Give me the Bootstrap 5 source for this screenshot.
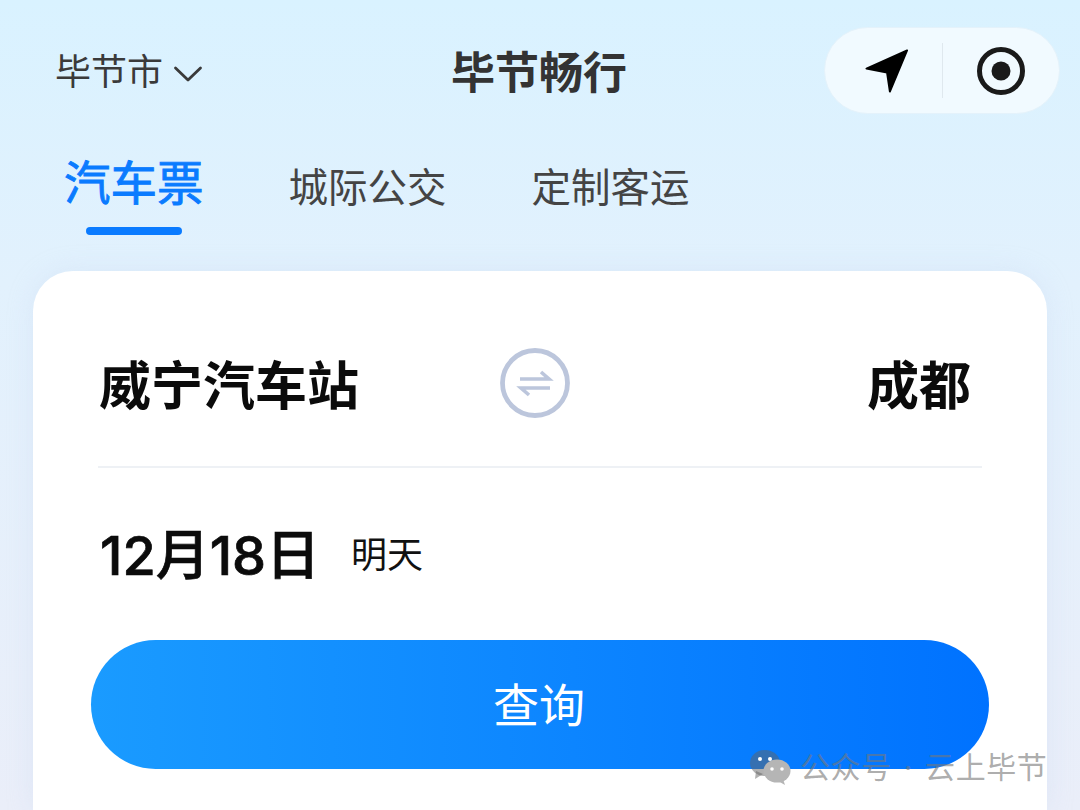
<!DOCTYPE html>
<html lang="zh-CN">

<head>
  <meta charset="UTF-8">
  <meta name="viewport" content="width=device-width, initial-scale=1.0">
  <title>毕节畅行</title>
  <link href="https://cdn.jsdelivr.net/npm/bootstrap@5.3.0/dist/css/bootstrap.min.css" rel="stylesheet">
  <style>
    html, body { height: 100%; }
    body {
      width: 1080px;
      height: 810px;
      overflow: hidden;
      position: relative;
      font-family: "Inter", "Noto Sans CJK SC", sans-serif;
      background: linear-gradient(180deg, #d9f2ff 0%, #e2f1fd 35%, #eaeef9 100%);
    }
    .top-head { padding: 27px 20px 0 55px; height: 114px; }
    .city-pick { width: 396px; font-size: 36px; color: #3a3a3a; line-height: 1; margin-top: 3px; }
    .city-pick svg { margin-left: 10px; margin-top: 3px; }
    .app-title { font-size: 44px; font-weight: 700; color: #333; line-height: 1; margin-top: 4px; }
    .capsule {
      width: 236px; height: 87px; border-radius: 44px;
      background: #f1faff; border: 1px solid #e4f2fb;
    }
    .capsule-sep { width: 1px; height: 55px; background: #dfe8ee; }
    .capsule-cell { width: 118px; }
    .nav-arrow { margin-left: 7px; }
    .tab-row { padding: 42px 0 0 64px; gap: 85px; height: 157px; }
    .tab-item { font-size: 39.5px; color: #444; line-height: 1; padding-top: 13px; position: relative; }
    .tab-item.is-on {
      font-size: 46.5px; font-weight: 400; color: #0a7bff; padding-top: 4px;
      -webkit-text-stroke: .9px #0a7bff;
    }
    .tab-item.is-on::after {
      content: ""; position: absolute; left: 22px; top: 71px;
      width: 96px; height: 8px; border-radius: 4px; background: #0a7bff;
    }
    .search-box {
      margin: 0 33px; height: 539px; border-radius: 40px 40px 0 0;
      background: #fff; padding: 0 58px;
      box-shadow: 0 0 24px rgba(200, 215, 240, .35);
    }
    .route-row {
      height: 197px; margin: 0 7px; padding: 36px 11px 0 1px;
      border-bottom: 2px solid #eef1f5;
    }
    .station { font-size: 52px; font-weight: 700; color: #0b0b0b; line-height: 1; }
    .station-from { width: 400px; }
    .swap-icon { margin-bottom: 8px; }
    .date-row { height: 172px; padding: 4px 9px 0; }
    .date-main {
      font-size: 54px; font-weight: 500; color: #0b0b0b; line-height: 1;
      -webkit-text-stroke: .7px #0b0b0b;
    }
    .date-sub { font-size: 36px; color: #111; line-height: 1; margin-left: 31px; margin-top: -3px; }
    .query-btn {
      width: 898px; height: 129px; border-radius: 65px; border: 0;
      background: linear-gradient(90deg, #1a9bff 0%, #0072ff 100%);
      color: #fff; font-size: 46px; line-height: 1; padding: 0 2px 0 0;
    }
    .wm-mark {
      position: absolute; left: 750px; top: 745px; gap: 9px;
      font-size: 30px; line-height: 44px; letter-spacing: .6px; color: rgba(120, 120, 120, .62);
    }
    .wm-dot { margin: 0 12px; }
  </style>
</head>

<body>
  <div class="top-head d-flex align-items-center">
    <div class="city-pick d-flex align-items-center">毕节市
      <svg width="30" height="18" viewBox="0 0 30 18"><path d="M2.500 3 15 15 27.500 3" fill="none" stroke="#3a3a3a" stroke-width="2.800" stroke-linecap="round" stroke-linejoin="round"/></svg>
    </div>
    <div class="app-title">毕节畅行</div>
    <div class="capsule d-flex align-items-center ms-auto">
      <div class="capsule-cell d-flex justify-content-center">
        <svg class="nav-arrow" width="44" height="44" viewBox="0 0 46 46"><path d="M44 1.500 1.500 20.500 23 24.500 26 44.500Z" fill="#000" stroke="#000" stroke-width="2" stroke-linejoin="round"/></svg>
      </div>
      <div class="capsule-sep"></div>
      <div class="capsule-cell d-flex justify-content-center">
        <svg width="48" height="48" viewBox="0 0 48 48"><circle cx="24" cy="24" r="21.500" fill="none" stroke="#1a1a1a" stroke-width="5"/><circle cx="24" cy="24" r="9.500" fill="#1a1a1a"/></svg>
      </div>
    </div>
  </div>

  <div class="tab-row d-flex align-items-start">
    <div class="tab-item is-on">汽车票</div>
    <div class="tab-item">城际公交</div>
    <div class="tab-item">定制客运</div>
  </div>

  <div class="search-box">
    <div class="route-row d-flex align-items-center">
      <div class="station station-from">威宁汽车站</div>
      <svg class="swap-icon" width="72" height="72" viewBox="0 0 72 72">
        <circle cx="36" cy="36" r="32.500" fill="#fff" stroke="#bcc6dc" stroke-width="4.800"/>
        <path d="M21 32H50L42 25M51 41H22L30 48" fill="none" stroke="#bcc6dc" stroke-width="3.600"/>
      </svg>
      <div class="station ms-auto">成都</div>
    </div>
    <div class="date-row d-flex align-items-center">
      <span class="date-main">12月18日</span>
      <span class="date-sub">明天</span>
    </div>
    <button class="btn query-btn d-block">查询</button>
  </div>

  <div class="wm-mark d-flex align-items-center">
    <svg width="41" height="36" viewBox="0 0 41 36">
      <ellipse cx="15" cy="14" rx="15" ry="13" fill="rgba(100,100,100,.5)"/>
      <path d="M6 22 5 30 13 25Z" fill="rgba(100,100,100,.5)"/>
      <ellipse cx="27" cy="22" rx="13.500" ry="11.500" fill="#b5b5b5"/>
      <path d="M33 30 35 36 28 32Z" fill="#b5b5b5"/>
      <circle cx="10" cy="10" r="2" fill="#fff"/><circle cx="20" cy="10" r="2" fill="#fff"/>
      <circle cx="22" cy="20" r="1.800" fill="#fff"/><circle cx="32" cy="20" r="1.800" fill="#fff"/>
    </svg>
    <span>公众号<span class="wm-dot">·</span>云上毕节</span>
  </div>

  <script src="https://cdn.jsdelivr.net/npm/bootstrap@5.3.0/dist/js/bootstrap.bundle.min.js"></script>
</body>

</html>
